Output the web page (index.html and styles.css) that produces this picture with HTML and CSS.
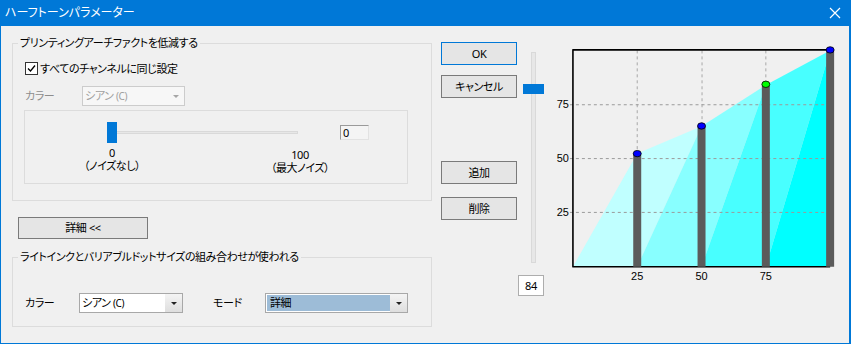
FILE: index.html
```html
<!DOCTYPE html>
<html lang="ja">
<head>
    <meta charset="UTF-8">
    <title>ハーフトーンパラメーター</title>
    <link rel="stylesheet" href="styles.css">
</head>
<body>
    <div class="window">
        <div class="titlebar">
            <span class="title">ハーフトーンパラメーター</span>
            <svg class="close" width="12" height="12" viewBox="0 0 12 12">
                <path d="M1 1 L11 11 M11 1 L1 11" stroke="#fff" stroke-width="1.2"/>
            </svg>
        </div>

        <div class="client">
            <div class="left">
                <fieldset class="group group-artifact">
                    <legend>プリンティングアーチファクトを低減する</legend>
                    <div class="check-row">
                        <span class="checkbox">
                            <svg width="11" height="11" viewBox="0 0 11 11">
                                <path d="M2 5.5 L4.5 8 L9 2.5" fill="none" stroke="#000" stroke-width="1.3"/>
                            </svg>
                        </span>
                        <span>すべてのチャンネルに同じ設定</span>
                    </div>
                    <div class="field-row is-disabled">
                        <span class="field-label">カラー</span>
                        <div class="combo combo-disabled combo-color-top">
                            <span class="combo-text">シアン <small>(C)</small></span>
                            <span class="combo-btn"><i class="arrow"></i></span>
                        </div>
                    </div>
                    <div class="noise-box">
                        <div class="noise-row">
                            <div class="hslider">
                                <div class="track"></div>
                                <div class="thumb"></div>
                            </div>
                            <div class="edit edit-noise">0</div>
                        </div>
                        <div class="noise-labels">
                            <div class="tick-label">0<br>（ノイズなし）</div>
                            <div class="tick-label tick-max">100<br>（最大ノイズ）</div>
                        </div>
                    </div>
                </fieldset>

                <button class="btn btn-detail">詳細 &lt;&lt;</button>

                <fieldset class="group group-ink">
                    <legend>ライトインクとバリアブルドットサイズの組み合わせが使われる</legend>
                    <div class="field-row ink-row">
                        <span class="field-label color-label">カラー</span>
                        <div class="combo combo-color">
                            <span class="combo-text">シアン <small>(C)</small></span>
                            <span class="combo-btn"><i class="arrow"></i></span>
                        </div>
                        <span class="field-label mode-label">モード</span>
                        <div class="combo combo-mode">
                            <span class="combo-text selected">詳細</span>
                            <span class="combo-btn"><i class="arrow"></i></span>
                        </div>
                    </div>
                </fieldset>
            </div>

            <div class="buttons">
                <button class="btn btn-default">OK</button>
                <button class="btn btn-cancel">キャンセル</button>
                <button class="btn btn-add">追加</button>
                <button class="btn btn-remove">削除</button>
            </div>

            <div class="vslider-col">
                <div class="vslider">
                    <div class="vtrack"></div>
                    <div class="vthumb"></div>
                </div>
                <div class="edit edit-level">84</div>
            </div>

            <svg class="chart" width="300" height="317" viewBox="549 26 300 317">
                <!-- vertical grid -->
                <g stroke="#a8a8a8" stroke-dasharray="3 3" stroke-width="1">
                    <path d="M636.5 50 V267 M701.5 50 V267 M765.5 50 V267"/>
                </g>
                <!-- curve bands -->
                <polygon points="572,267 636.5,153.3 701,126 636.5,267" fill="#c0ffff"/>
                <polygon points="636.5,267 701,126 765.5,84.7 701,267" fill="#88ffff"/>
                <polygon points="701,267 765.5,84.7 830,50 765.5,267" fill="#48ffff"/>
                <polygon points="765.5,267 830,50 830,267" fill="#00ffff"/>
                <!-- horizontal grid -->
                <g stroke="#9a9a9a" stroke-dasharray="3 3" stroke-width="1">
                    <path d="M569 104.5 H830 M569 158.5 H830 M569 212.5 H830"/>
                </g>
                <!-- frame -->
                <path d="M571.5 49.5 H830 M572 49 V267.5 M571.5 267 H830" stroke="#000" stroke-width="1.6" fill="none"/>
                <!-- bars -->
                <g fill="#5b5b5b">
                    <rect x="632.5" y="153" width="8" height="114"/>
                    <rect x="697" y="126" width="8" height="141"/>
                    <rect x="761.5" y="85" width="8" height="182"/>
                    <rect x="826" y="50" width="8" height="217"/>
                </g>
                <!-- points -->
                <g stroke="#000" stroke-width="0.8">
                    <ellipse cx="636.5" cy="153.5" rx="4" ry="3.2" fill="#0000ff"/>
                    <ellipse cx="701" cy="125.8" rx="4" ry="3.2" fill="#0000ff"/>
                    <ellipse cx="765.5" cy="84" rx="4" ry="3.2" fill="#00ff00"/>
                    <ellipse cx="830" cy="49.5" rx="4" ry="3.2" fill="#0000ff"/>
                </g>
                <!-- axis labels -->
                <g class="axis-text">
                    <text x="568" y="108" text-anchor="end">75</text>
                    <text x="568" y="162" text-anchor="end">50</text>
                    <text x="568" y="216.5" text-anchor="end">25</text>
                    <text x="636.5" y="280" text-anchor="middle">25</text>
                    <text x="701" y="280" text-anchor="middle">50</text>
                    <text x="765.5" y="280" text-anchor="middle">75</text>
                </g>
            </svg>
        </div>
    </div>
</body>
</html>
```

FILE: styles.css
```css
html, body {
    margin: 0;
    padding: 0;
}
body {
    width: 851px;
    height: 344px;
    overflow: hidden;
    background-color: #0078d7;
    font-family: "Noto Sans", "Noto Sans CJK JP", sans-serif;
    font-size: 12px;
    font-feature-settings: "palt";
    color: #000;
}
.window {
    width: 851px;
    height: 344px;
}
.titlebar {
    height: 26px;
    display: flex;
    align-items: center;
    justify-content: space-between;
    padding: 0 10px 0 5px;
    color: #fff;
    line-height: 16px;
}
.title {
    margin-top: -1px;
}
.close {
    display: block;
}
.client {
    display: flex;
    align-items: flex-start;
    width: 848px;
    height: 317px;
    margin-left: 1px;
    background-color: #f0f0f0;
    font-size: 11px;
    letter-spacing: -0.4px;
}

/* left column */
.left {
    width: 420px;
    margin-left: 11px;
    padding-top: 9px;
}
.group {
    margin: 0;
    padding: 0 0 0 12px;
    border: 1px solid #dcdcdc;
    min-inline-size: 0;
    box-sizing: border-box;
    width: 420px;
}
.group legend {
    margin-left: -7px;
    padding: 0 2px;
    line-height: 16px;
}
.group-artifact {
    padding-bottom: 16px;
}
.check-row {
    display: flex;
    align-items: center;
    height: 16px;
    margin-top: 9px;
    gap: 2px;
}
.checkbox {
    width: 11px;
    height: 11px;
    border: 1px solid #333;
    background-color: #fff;
    display: flex;
}
.field-row {
    display: flex;
    align-items: center;
    margin-top: 10px;
}
.field-label {
    width: 57px;
    line-height: 16px;
}
.is-disabled .field-label {
    color: #8d8d8d;
}
.combo {
    display: flex;
    height: 20px;
    box-sizing: border-box;
    border: 1px solid #a8a8a8;
    background-color: #fff;
}
.combo-text {
    flex: 1;
    line-height: 18px;
    padding-left: 2px;
}
.combo-text small {
    font-size: 10px;
}
.combo-btn {
    width: 17px;
    display: flex;
    align-items: center;
    justify-content: center;
    background: linear-gradient(#f4f4f4, #dedede);
}
.arrow {
    width: 0;
    height: 0;
    border-left: 3px solid transparent;
    border-right: 3px solid transparent;
    border-top: 3px solid #222;
}
.combo-color-top {
    width: 103px;
}
.combo-disabled {
    border-color: #cccccc;
    background-color: #f7f7f7;
    color: #a0a0a0;
}
.combo-disabled .combo-btn {
    background: #f7f7f7;
}
.combo-disabled .arrow {
    border-top-color: #a6a6a6;
}

.noise-box {
    margin-top: 4px;
    margin-left: -1px;
    width: 384px;
    height: 74px;
    box-sizing: border-box;
    border: 1px solid #dcdcdc;
}
.noise-row {
    display: flex;
    align-items: flex-start;
    margin-top: 11px;
    padding-left: 82px;
}
.hslider {
    position: relative;
    width: 191px;
    height: 21px;
}
.track {
    margin-top: 9px;
    height: 3px;
    box-sizing: border-box;
    background-color: #e7e7e7;
    border: 1px solid #d9d9d9;
}
.thumb {
    position: absolute;
    left: 0;
    top: 0;
    width: 10px;
    height: 21px;
    background-color: #0078d7;
}
.edit {
    box-sizing: border-box;
    border: 1px solid #b4b4b4;
    background-color: #fff;
}
.edit-noise {
    margin-left: 42px;
    margin-top: 3px;
    width: 29px;
    height: 15px;
    line-height: 13px;
    padding-left: 2px;
    border-color: #9a9a9a #e2e2e2 #e2e2e2 #9a9a9a;
    background-color: #f4f4f4;
}
.noise-labels {
    display: flex;
    margin-top: 3px;
    padding-left: 37px;
}
.tick-label {
    width: 100px;
    text-align: center;
    line-height: 13px;
}
.tick-max {
    margin-left: 88px;
    margin-top: 2px;
}

.btn {
    display: block;
    box-sizing: border-box;
    padding: 0;
    margin: 0;
    font: inherit;
    letter-spacing: inherit;
    color: #000;
    background-color: #e5e5e5;
    border: 1px solid #7a7a7a;
    line-height: 18px;
}
.btn-detail {
    margin-top: 16px;
    margin-left: 6px;
    width: 130px;
    height: 22px;
}
.group-ink {
    margin-top: 10px;
    padding-bottom: 13px;
}
.ink-row {
    margin-top: 28px;
}
.color-label {
    width: 54px;
}
.combo-color {
    width: 104px;
}
.mode-label {
    margin-left: 30px;
    width: 52px;
}
.combo-mode {
    width: 143px;
}
.combo-text.selected {
    margin: 1px 0 1px 1px;
    line-height: 16px;
    padding-left: 3px;
    background-color: #9dbcd7;
}

/* right side */
.buttons {
    width: 76px;
    margin-left: 9px;
    padding-top: 16px;
}
.buttons .btn {
    width: 76px;
    height: 23px;
}
.btn-default {
    border-color: #0078d7;
}
.btn-cancel {
    margin-top: 10px;
}
.btn-add {
    margin-top: 63px;
}
.btn-remove {
    margin-top: 13px;
}

.vslider-col {
    width: 27px;
    margin-left: 1px;
    padding-top: 26px;
}
.vslider {
    position: relative;
    height: 211px;
}
.vtrack {
    margin-left: 13px;
    width: 5px;
    height: 211px;
    box-sizing: border-box;
    background-color: #e7e7e7;
    border: 1px solid #d9d9d9;
}
.vthumb {
    position: absolute;
    left: 5px;
    top: 32px;
    width: 21px;
    height: 10px;
    background-color: #0078d7;
}
.edit-level {
    margin-top: 12px;
    width: 26px;
    height: 21px;
    line-height: 19px;
    text-align: center;
    border-color: #adadad;
}

.chart {
    display: block;
    margin-left: 5px;
}
.axis-text {
    font-family: "Liberation Sans", sans-serif;
    font-size: 11px;
    letter-spacing: 0;
    fill: #000;
}
```
